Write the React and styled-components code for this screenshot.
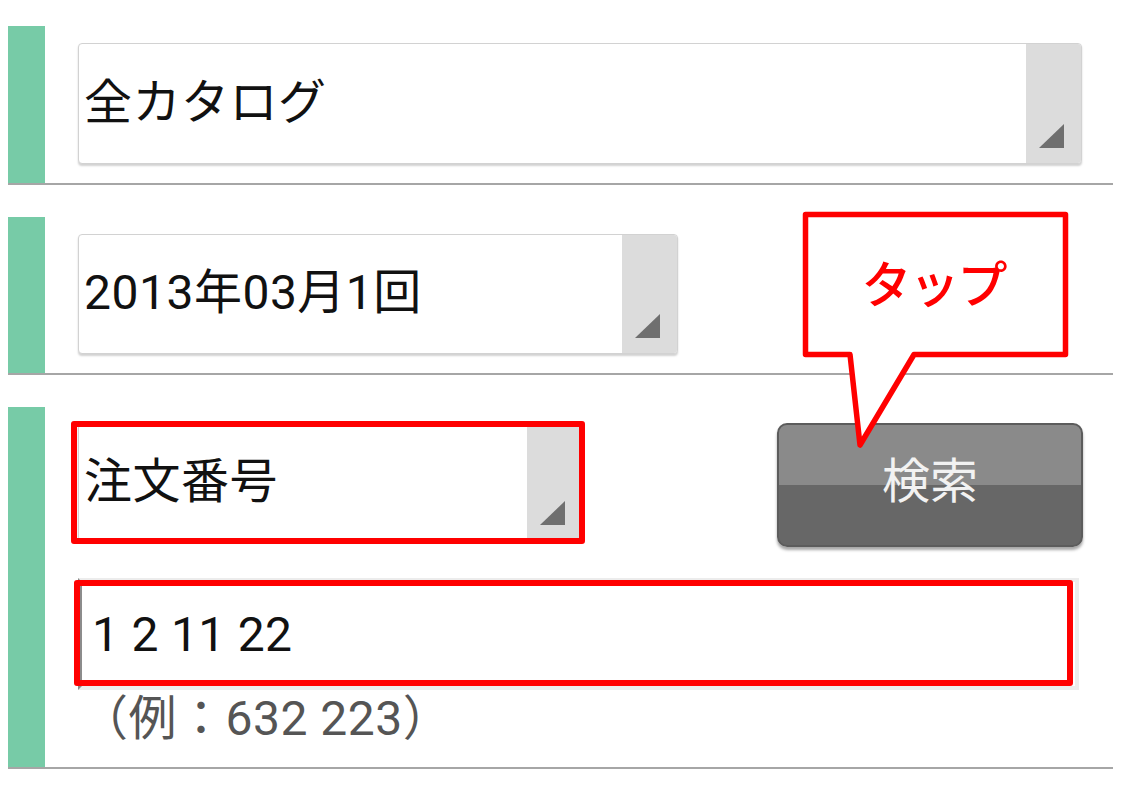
import React from "react";
import styled, { createGlobalStyle } from "styled-components";

const Global = createGlobalStyle`
  html, body { margin: 0; padding: 0; background: #ffffff; }
  body { font-family: Roboto, "Noto Sans CJK JP", sans-serif; }
`;

const Page = styled.div`
  position: relative;
  width: 1125px;
  height: 803px;
  padding: 26px 0 0 8px;
  box-sizing: border-box;
  display: flex;
  flex-direction: column;
  gap: 32px;
  overflow: hidden;
`;

const Section = styled.section`
  display: flex;
  width: 1105px;
  border-bottom: 2px solid #a6a6a6;
`;

const GreenBar = styled.div`
  width: 37px;
  flex: none;
  background: #77cba7;
`;

const Body = styled.div`
  flex: 1;
  display: flex;
  flex-direction: column;
  padding: ${(p) => p.$pt}px 30px ${(p) => p.$pb}px 33px;
`;

const Row = styled.div`
  display: flex;
  justify-content: space-between;
  align-items: flex-start;
`;

const SelectBox = styled.div`
  position: relative;
  display: flex;
  width: ${(p) => p.$w}px;
  height: ${(p) => p.$h}px;
  margin-top: ${(p) => p.$mt || 0}px;
  box-sizing: border-box;
  border: 1px solid #d2d2d2;
  border-radius: 4px;
  background: #fff;
  box-shadow: 0 2px 2px rgba(0, 0, 0, 0.18);
`;

const SelectLabel = styled.div`
  flex: 1;
  display: flex;
  align-items: center;
  padding: 0 0 12px 5px;
  font-family: Roboto, "Noto Sans CJK JP", sans-serif;
  font-size: 48px;
  letter-spacing: 0.5px;
  color: #111;
  white-space: nowrap;
`;

const ArrowArea = styled.div`
  position: relative;
  width: 55px;
  flex: none;
  background: #dcdcdc;
  border-radius: 0 3px 3px 0;
`;

const Triangle = styled.div`
  position: absolute;
  right: 17px;
  bottom: 15px;
  width: 25px;
  height: 24px;
  background: #6f6f6f;
  clip-path: polygon(100% 0, 100% 100%, 0 100%);
`;

const Highlight = styled.div`
  position: absolute;
  left: ${(p) => p.$l}px;
  top: ${(p) => p.$t}px;
  right: ${(p) => p.$r}px;
  bottom: ${(p) => p.$b}px;
  border: 6px solid #ff0000;
  border-radius: 3px;
  pointer-events: none;
`;

const SearchButton = styled.button`
  width: 306px;
  height: 124px;
  margin: 0;
  padding: 0 0 16px 0;
  box-sizing: border-box;
  border: 2px solid #5c5c5c;
  border-radius: 10px;
  background: linear-gradient(#8a8a8a 0, #8a8a8a 50%, #676767 50%, #676767 100%);
  box-shadow: 0 3px 3px rgba(0, 0, 0, 0.35);
  font-family: Roboto, "Noto Sans CJK JP", sans-serif;
  font-size: 48px;
  color: #f2f2f2;
`;

const InputWrap = styled.div`
  position: relative;
  width: 1001px;
  height: 112px;
  margin-top: 31px;
`;

const TextField = styled.div`
  width: 100%;
  height: 100%;
  box-sizing: border-box;
  background: #fff;
  border: 4px solid #ececec;
  border-left: 4px solid #8c8c8c;
  display: flex;
  align-items: center;
  padding-left: 10px;
  font-family: Roboto, "Noto Sans CJK JP", sans-serif;
  font-size: 48px;
  letter-spacing: 0.3px;
  color: #111;
`;

const Hint = styled.div`
  margin-top: 1px;
  padding-left: 2px;
  font-family: Roboto, "Noto Sans CJK JP", sans-serif;
  font-size: 48px;
  line-height: 56px;
  letter-spacing: 0.5px;
  color: #555;
`;

const Callout = styled.div`
  position: absolute;
  left: 800px;
  top: 209px;
  width: 272px;
  height: 240px;
  pointer-events: none;
`;

const CalloutShape = styled.svg`
  position: absolute;
  left: 0;
  top: 0;
`;

const CalloutText = styled.div`
  position: absolute;
  left: 3px;
  top: 3px;
  width: 265px;
  height: 145px;
  display: flex;
  align-items: center;
  justify-content: center;
  padding: 0 4px 8px 0;
  box-sizing: border-box;
  font-family: "Noto Sans CJK JP", sans-serif;
  font-size: 50px;
  font-weight: 500;
  letter-spacing: -2px;
  color: #ff0000;
`;

function Select({ label, w, h, mt, children }) {
  return (
    <SelectBox $w={w} $h={h} $mt={mt}>
      <SelectLabel>{label}</SelectLabel>
      <ArrowArea>
        <Triangle />
      </ArrowArea>
      {children}
    </SelectBox>
  );
}

export default function App() {
  return (
    <>
      <Global />
      <Page>
        <Section>
          <GreenBar />
          <Body $pt={17} $pb={19}>
            <Select label="全カタログ" w={1004} h={121} />
          </Body>
        </Section>
        <Section>
          <GreenBar />
          <Body $pt={17} $pb={19}>
            <Select label="2013年03月1回" w={600} h={120} />
          </Body>
        </Section>
        <Section>
          <GreenBar />
          <Body $pt={16} $pb={20}>
            <Row>
              <Select label="注文番号" w={505} h={117} mt={1}>
                <Highlight $l={-8} $t={-4} $r={-3} $b={-4} />
              </Select>
              <SearchButton>検索</SearchButton>
            </Row>
            <InputWrap>
              <TextField>1 2 11 22</TextField>
              <Highlight $l={-4} $t={2} $r={6} $b={4} />
            </InputWrap>
            <Hint>（例：632 223）</Hint>
          </Body>
        </Section>
        <Callout>
          <CalloutShape width="272" height="240" viewBox="0 0 272 240">
            <path
              d="M5.5 5.5 H265.5 V145.5 H114 L60 236 L50 145.5 H5.5 Z"
              fill="#ffffff"
              stroke="#ff0000"
              strokeWidth="5.5"
              strokeLinejoin="round"
            />
          </CalloutShape>
          <CalloutText>タップ</CalloutText>
        </Callout>
      </Page>
    </>
  );
}
